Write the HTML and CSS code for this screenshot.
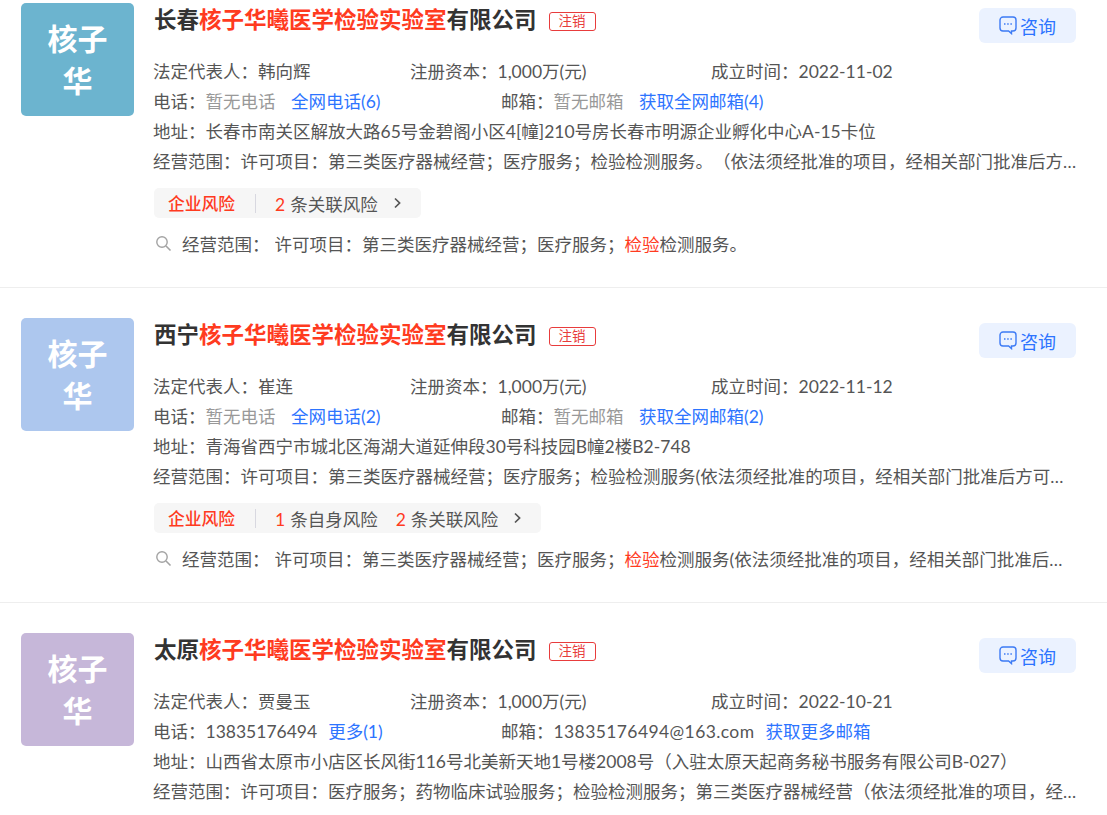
FILE: index.html
```html
<!DOCTYPE html>
<html>
<head>
<meta charset="UTF-8">
<title>企业搜索结果</title>
<link rel="stylesheet" href="styles.css">
</head>
<body>
	<div class="list">

		<div class="card card-first">
			<div class="logo logo-blue">核子<br>华</div>
			<div class="info">
				<div class="title-row">
					<span class="name">长春<em>核子华曦医学检验实验室</em>有限公司</span>
					<span class="tag">注销</span>
					<a class="ask">
						<svg width="18" height="19" viewBox="0 0 18 19"><path d="M4 1h10a3 3 0 0 1 3 3v8a3 3 0 0 1-3 3h-1.5v2.6L9.6 15H4a3 3 0 0 1-3-3V4a3 3 0 0 1 3-3z" fill="none" stroke="#3d7bf5" stroke-width="1.4"/><path d="M5 8h1.5M8.2 8h1.5M11.4 8h1.5" stroke="#3d7bf5" stroke-width="1.5"/></svg>
						咨询
					</a>
				</div>
				<div class="row row-cols row-first">
					<span class="col-a">法定代表人：韩向辉</span>
					<span class="col-b">注册资本：1,000万(元)</span>
					<span>成立时间：2022-11-02</span>
				</div>
				<div class="row row-cols">
					<span class="col-c">电话：<i class="none">暂无电话</i><a class="link">全网电话(6)</a></span>
					<span>邮箱：<i class="none">暂无邮箱</i><a class="link">获取全网邮箱(4)</a></span>
				</div>
				<div class="row">地址：长春市南关区解放大路65号金碧阁小区4[幢]210号房长春市明源企业孵化中心A-15卡位</div>
				<div class="row">经营范围：许可项目：第三类医疗器械经营；医疗服务；检验检测服务。（依法须经批准的项目，经相关部门批准后方可开展经营活动）</div>
				<div class="risk">
					<span class="risk-label">企业风险</span>
					<span class="risk-line"></span>
					<span class="risk-item"><b>2</b>条关联风险</span>
					<svg class="risk-arrow" width="9" height="12" viewBox="0 0 9 12"><path d="M2 1.5L6.6 6L2 10.5" fill="none" stroke="#555" stroke-width="1.7"/></svg>
				</div>
				<div class="hit">
					<svg class="hit-icon" width="17" height="17" viewBox="0 0 17 17"><circle cx="7" cy="7" r="5.2" fill="none" stroke="#a3a3a3" stroke-width="1.4"/><path d="M11 11L15.5 15.5" stroke="#a3a3a3" stroke-width="1.6"/></svg>
					<span class="hit-label">经营范围：</span>
					<span class="hit-text">许可项目：第三类医疗器械经营；医疗服务；<em>检验</em>检测服务。</span>
				</div>
			</div>
		</div>

		<div class="card">
			<div class="logo logo-sky">核子<br>华</div>
			<div class="info">
				<div class="title-row">
					<span class="name">西宁<em>核子华曦医学检验实验室</em>有限公司</span>
					<span class="tag">注销</span>
					<a class="ask">
						<svg width="18" height="19" viewBox="0 0 18 19"><path d="M4 1h10a3 3 0 0 1 3 3v8a3 3 0 0 1-3 3h-1.5v2.6L9.6 15H4a3 3 0 0 1-3-3V4a3 3 0 0 1 3-3z" fill="none" stroke="#3d7bf5" stroke-width="1.4"/><path d="M5 8h1.5M8.2 8h1.5M11.4 8h1.5" stroke="#3d7bf5" stroke-width="1.5"/></svg>
						咨询
					</a>
				</div>
				<div class="row row-cols row-first">
					<span class="col-a">法定代表人：崔连</span>
					<span class="col-b">注册资本：1,000万(元)</span>
					<span>成立时间：2022-11-12</span>
				</div>
				<div class="row row-cols">
					<span class="col-c">电话：<i class="none">暂无电话</i><a class="link">全网电话(2)</a></span>
					<span>邮箱：<i class="none">暂无邮箱</i><a class="link">获取全网邮箱(2)</a></span>
				</div>
				<div class="row">地址：青海省西宁市城北区海湖大道延伸段30号科技园B幢2楼B2-748</div>
				<div class="row">经营范围：许可项目：第三类医疗器械经营；医疗服务；检验检测服务(依法须经批准的项目，经相关部门批准后方可开展经营活动)</div>
				<div class="risk">
					<span class="risk-label">企业风险</span>
					<span class="risk-line"></span>
					<span class="risk-item"><b>1</b>条自身风险</span>
					<span class="risk-item"><b>2</b>条关联风险</span>
					<svg class="risk-arrow" width="9" height="12" viewBox="0 0 9 12"><path d="M2 1.5L6.6 6L2 10.5" fill="none" stroke="#555" stroke-width="1.7"/></svg>
				</div>
				<div class="hit">
					<svg class="hit-icon" width="17" height="17" viewBox="0 0 17 17"><circle cx="7" cy="7" r="5.2" fill="none" stroke="#a3a3a3" stroke-width="1.4"/><path d="M11 11L15.5 15.5" stroke="#a3a3a3" stroke-width="1.6"/></svg>
					<span class="hit-label">经营范围：</span>
					<span class="hit-text">许可项目：第三类医疗器械经营；医疗服务；<em>检验</em>检测服务(依法须经批准的项目，经相关部门批准后方可开展经营活动)</span>
				</div>
			</div>
		</div>

		<div class="card card-last">
			<div class="logo logo-purple">核子<br>华</div>
			<div class="info">
				<div class="title-row">
					<span class="name">太原<em>核子华曦医学检验实验室</em>有限公司</span>
					<span class="tag">注销</span>
					<a class="ask">
						<svg width="18" height="19" viewBox="0 0 18 19"><path d="M4 1h10a3 3 0 0 1 3 3v8a3 3 0 0 1-3 3h-1.5v2.6L9.6 15H4a3 3 0 0 1-3-3V4a3 3 0 0 1 3-3z" fill="none" stroke="#3d7bf5" stroke-width="1.4"/><path d="M5 8h1.5M8.2 8h1.5M11.4 8h1.5" stroke="#3d7bf5" stroke-width="1.5"/></svg>
						咨询
					</a>
				</div>
				<div class="row row-cols row-first">
					<span class="col-a">法定代表人：贾曼玉</span>
					<span class="col-b">注册资本：1,000万(元)</span>
					<span>成立时间：2022-10-21</span>
				</div>
				<div class="row row-cols">
					<span class="col-c">电话：13835176494<a class="link link-near">更多(1)</a></span>
					<span>邮箱：<span class="mail">13835176494@163.com</span><a class="link link-near">获取更多邮箱</a></span>
				</div>
				<div class="row">地址：山西省太原市小店区长风街116号北美新天地1号楼2008号（入驻太原天起商务秘书服务有限公司B-027）</div>
				<div class="row">经营范围：许可项目：医疗服务；药物临床试验服务；检验检测服务；第三类医疗器械经营（依法须经批准的项目，经相关部门批准后方可开展经营活动）</div>
			</div>
		</div>

	</div>
</body>
</html>
```

FILE: styles.css
```css
html, body {
	margin: 0;
	background: #fff;
}

body {
	font-family: Lato, "Noto Sans CJK SC", sans-serif;
	font-size: 17.5px;
	color: #555;
	text-spacing-trim: space-all;
}

.list {
	padding-top: 3px;
}

.card {
	display: flex;
	height: 315px;
	box-sizing: border-box;
	padding: 30px 0 0 21px;
	border-bottom: 1px solid #eee;
}

.card-first {
	height: 285px;
	padding-top: 0;
}

.card-last {
	height: auto;
	border-bottom: 0;
}

.logo {
	flex: none;
	width: 113px;
	height: 113px;
	margin-right: 19px;
	border-radius: 5px;
	color: #fff;
	font-size: 30px;
	font-weight: 700;
	line-height: 42px;
	text-align: center;
	padding-top: 14px;
	box-sizing: border-box;
}

.logo-blue { background: #6cb4cf; }
.logo-sky { background: #adc7ee; }
.logo-purple { background: #c6b7d9; }

.info {
	width: 925px;
	flex: none;
	min-width: 0;
}

.title-row {
	display: flex;
	align-items: center;
	height: 36px;
	margin-top: -3px;
}

.name {
	margin-left: 1px;
	font-size: 22.5px;
	font-weight: 700;
	color: #333;
}

.name em, .hit em {
	font-style: normal;
	color: #ff3b1f;
}

.tag {
	margin: 7px 0 0 12px;
	width: 47px;
	height: 19px;
	box-sizing: border-box;
	border: 1px solid #e83c3c;
	border-radius: 3px;
	color: #e83c3c;
	font-size: 13.5px;
	line-height: 17px;
	text-align: center;
}

.ask {
	display: flex;
	align-items: center;
	justify-content: center;
	gap: 3px;
	align-self: flex-start;
	flex: none;
	width: 97px;
	height: 35px;
	margin: 8px 2px 0 auto;
	border-radius: 6px;
	background: #ebf2ff;
	color: #2d74ff;
	font-size: 18px;
}

.row {
	height: 30px;
	line-height: 30px;
	white-space: nowrap;
	overflow: hidden;
	text-overflow: ellipsis;
}

.row-cols {
	display: flex;
}

.row-first {
	margin-top: 21px;
}

.col-a {
	width: 257px;
}

.col-b {
	width: 301px;
}

.col-c {
	width: 348px;
}

.none {
	font-style: normal;
	color: #999;
}

.mail {
	letter-spacing: 0.4px;
}

.link {
	margin-left: 15.5px;
	color: #2d74ff;
}

.link-near {
	margin-left: 11px;
}

.risk {
	display: inline-flex;
	align-items: center;
	height: 30px;
	margin: 11px 0 0 1px;
	padding: 0 19px 0 14px;
	border-radius: 5px;
	background: #f6f6f6;
	vertical-align: top;
}

.risk-label {
	color: #ff3b1f;
	font-size: 16.75px;
	font-weight: 500;
}

.risk-line {
	width: 1px;
	height: 19px;
	margin: 0 19px 0 20px;
	background: #d8d8e0;
}

.risk-item + .risk-item {
	margin-left: 18px;
}

.risk-item b {
	font-weight: 400;
	color: #ff3b1f;
	margin-right: 5px;
}

.risk-arrow {
	margin-left: 15px;
}

.hit {
	display: flex;
	align-items: center;
	height: 30px;
	margin-top: 10px;
	white-space: nowrap;
}

.hit-icon {
	flex: none;
	margin: 0 10px 0 2px;
}

.hit-label {
	flex: none;
	margin-right: 5px;
}

.hit-text {
	width: 793px;
	overflow: hidden;
	text-overflow: ellipsis;
}
```
